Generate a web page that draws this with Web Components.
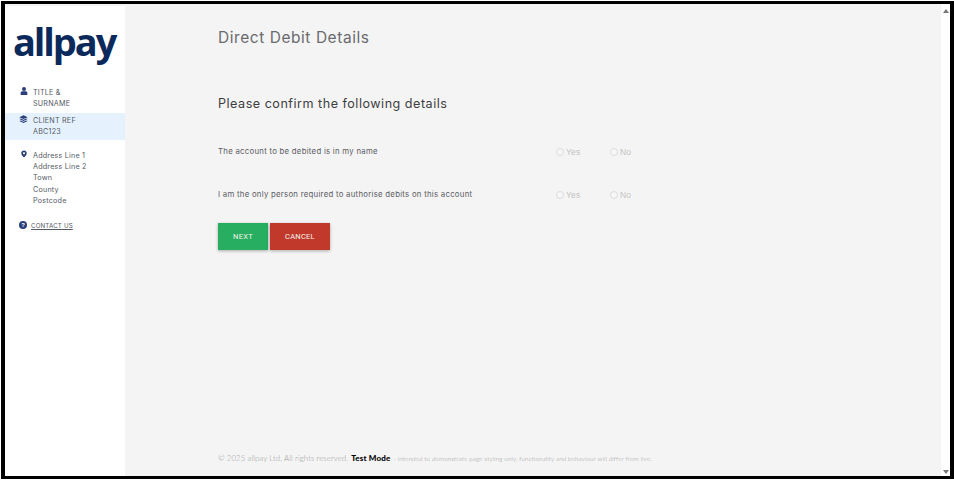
<!DOCTYPE html>
<html lang="en">
<head>
<meta charset="utf-8">
<title>Direct Debit Details</title>
<style>
  html, body { margin: 0; height: 100%; }
  body { background: #fff; font-family: "Inter", "Liberation Sans", sans-serif; overflow: hidden; }
</style>
</head>
<body>
<app-shell>
  <side-bar slot="side">
    <side-item icon="user">TITLE &amp;<br>SURNAME</side-item>
    <side-item icon="layers" active>CLIENT REF<br>ABC123</side-item>
    <side-item icon="pin" address>Address Line 1<br>Address Line 2<br>Town<br>County<br>Postcode</side-item>
    <contact-link></contact-link>
  </side-bar>
  <debit-form slot="main"></debit-form>
</app-shell>

<script>
const ICONS = {
  user: '<svg viewBox="0 0 10 10" width="8" height="8"><circle cx="5" cy="2.6" r="2.5" fill="#2c3e7b"/><path d="M0.8 10V7.6C0.8 6 2 5.2 3.2 5.2H6.8C8 5.2 9.2 6 9.2 7.6V10Z" fill="#2c3e7b"/></svg>',
  layers: '<svg viewBox="0 0 10 10" width="9" height="9"><path d="M5 0.4L9.6 2.4 5 4.4 0.4 2.4Z M0.4 4.5L2 3.9 5 5.2 8 3.9 9.6 4.5 5 6.6Z M0.4 6.8L2 6.2 5 7.5 8 6.2 9.6 6.8 5 8.9Z" fill="#2c3e7b"/></svg>',
  pin: '<svg viewBox="0 0 10 12" width="6" height="8"><path fill-rule="evenodd" d="M5 0.2C2.3 0.2 0.4 2.2 0.4 4.7C0.4 7.4 3.6 10.6 5 11.8C6.4 10.6 9.6 7.4 9.6 4.7C9.6 2.2 7.7 0.2 5 0.2ZM5 3C6 3 6.7 3.7 6.7 4.6S6 6.3 5 6.3S3.3 5.5 3.3 4.6S4 3 5 3Z" fill="#2c3e7b"/></svg>'
};

class AppShell extends HTMLElement {
  constructor() {
    super();
    this.attachShadow({ mode: 'open' }).innerHTML = `
      <style>
        :host {
          display: flex;
          box-sizing: border-box;
          width: 954px;
          height: 480px;
          padding: 1px 0 1px 1px;
          background: #fff;
        }
        .frame {
          flex: 1;
          display: flex;
          min-width: 0;
          border: solid #000;
          border-width: 3px 4px 3px 4px;
          background: #f4f4f4;
        }
        .side { flex: 0 0 120px; min-width: 0; display: block; padding-top: 2px; }
        .main { flex: 1; min-width: 0; display: flex; }
        .bar {
          flex: 0 0 9px;
          background: #fff;
          display: flex;
          flex-direction: column;
          justify-content: space-between;
          align-items: center;
          padding: 5px 0 2px;
        }
        .up, .down { width: 0; height: 0; border-left: 3px solid transparent; border-right: 3px solid transparent; }
        .up { border-bottom: 4px solid #777; }
        .down { border-top: 4px solid #777; }
      </style>
      <div class="frame">
        <div class="side"><slot name="side"></slot></div>
        <div class="main"><slot name="main"></slot></div>
        <div class="bar"><span class="up"></span><span class="down"></span></div>
      </div>`;
  }
}

class SideBar extends HTMLElement {
  constructor() {
    super();
    this.attachShadow({ mode: 'open' }).innerHTML = `
      <style>
        :host {
          display: flex;
          flex-direction: column;
          box-sizing: border-box;
          height: 100%;
          background: #fff;
          border-top-left-radius: 2px;
          font-family: "Inter", "Liberation Sans", sans-serif;
        }
        .logo {
          height: 76px;
          padding: 13px 0 0 8px;
          box-sizing: border-box;
          font: 700 38px/44px "Open Sans", "Liberation Sans", sans-serif;
          letter-spacing: -2.1px;
          color: #0b2a5b;
        }
      </style>
      <div class="logo">allpay</div>
      <slot></slot>`;
  }
}

class SideItem extends HTMLElement {
  constructor() {
    super();
    const icon = ICONS[this.getAttribute('icon')];
    this.attachShadow({ mode: 'open' }).innerHTML = `
      <style>
        :host {
          display: flex;
          gap: 5px;
          padding: 5px 0 3.2px 14px;
          font-size: 7.2px;
          line-height: 11.4px;
          letter-spacing: 0.2px;
          color: #555a66;
        }
        :host([active]) { background: #e5f2fd; padding-top: 1.5px; padding-bottom: 2.7px; }
        :host([address]) { padding-top: 9.5px; padding-bottom: 0; margin-bottom: 14.5px; }
        .icon { flex: 0 0 9px; display: flex; justify-content: center; }
        svg { display: block; }
      </style>
      <span class="icon">${icon}</span>
      <span><slot></slot></span>`;
  }
}

class ContactLink extends HTMLElement {
  constructor() {
    super();
    this.attachShadow({ mode: 'open' }).innerHTML = `
      <style>
        :host {
          display: flex;
          align-items: center;
          gap: 4px;
          padding-left: 14px;
          font-size: 6.2px;
          letter-spacing: 0.15px;
          color: #555a66;
        }
        .q {
          width: 8px; height: 8px; border-radius: 50%;
          background: #2c3e7b; color: #fff;
          font: 700 6px/8px "Liberation Sans", sans-serif;
          text-align: center; letter-spacing: 0;
        }
        a { color: inherit; text-decoration: underline; }
      </style>
      <span class="q">?</span><a href="#">CONTACT US</a>`;
  }
}

class ChoiceRow extends HTMLElement {
  constructor() {
    super();
    this.attachShadow({ mode: 'open' }).innerHTML = `
      <style>
        :host {
          display: grid;
          grid-template-columns: 338px 54px auto;
          align-items: center;
          height: 43px;
          font-size: 7.8px;
          letter-spacing: 0.26px;
          color: #5c5c64;
        }
        label {
          display: flex;
          align-items: center;
          gap: 2px;
          margin-top: 2px;
          font: 8.5px "Liberation Sans", sans-serif;
          letter-spacing: 0.2px;
          color: #c2c2c2;
        }
        i {
          box-sizing: border-box;
          width: 8px; height: 8px;
          border-radius: 50%;
          border: 1px solid #dcdcdc;
          background: #f6f6f6;
        }
      </style>
      <span><slot></slot></span>
      <label><i></i>Yes</label>
      <label><i></i>No</label>`;
  }
}

class ActionButton extends HTMLElement {
  constructor() {
    super();
    this.attachShadow({ mode: 'open' }).innerHTML = `
      <style>
        :host {
          display: flex;
          align-items: center;
          justify-content: center;
          height: 27px;
          width: var(--w, 50px);
          background: var(--bg, #27ae60);
          color: #f3f3ee;
          font: 400 7.5px "Roboto", "Liberation Sans", sans-serif;
          letter-spacing: 0.25px;
          box-shadow: 0 1px 3px rgba(0,0,0,.3);
        }
      </style>
      <slot></slot>`;
  }
}

class DebitForm extends HTMLElement {
  constructor() {
    super();
    this.attachShadow({ mode: 'open' }).innerHTML = `
      <style>
        :host {
          display: flex;
          flex-direction: column;
          flex: 1;
          box-sizing: border-box;
          padding: 24px 0 0 93px;
          min-width: 0;
        }
        h1 {
          margin: 0;
          font-weight: 400;
          font-size: 15.5px;
          line-height: 20px;
          letter-spacing: 0.55px;
          color: #6a6a6e;
        }
        h2 {
          margin: 46px 0 15px;
          font-weight: 400;
          font-size: 12.6px;
          line-height: 20px;
          letter-spacing: 0.5px;
          color: #3e3e42;
        }
        .buttons { display: flex; gap: 2px; margin-top: 8px; }
        footer {
          margin-top: auto;
          padding-bottom: 13px;
          display: flex;
          align-items: baseline;
          white-space: nowrap;
          font: 300 7.8px "Lato", "Liberation Sans", sans-serif;
          color: #9d9d9d;
          letter-spacing: 0.1px;
        }
        b { font: 900 8px "Lato", "Liberation Sans", sans-serif; color: #000; margin: 0 3px; letter-spacing: .2px; }
        small { font-size: 6.3px; color: #9a9a9a; }
      </style>
      <h1>Direct Debit Details</h1>
      <h2>Please confirm the following details</h2>
      <choice-row>The account to be debited is in my name</choice-row>
      <choice-row>I am the only person required to authorise debits on this account</choice-row>
      <div class="buttons">
        <action-button>NEXT</action-button>
        <action-button style="--bg:#c0392b;--w:60px">CANCEL</action-button>
      </div>
      <footer>© 2025 allpay Ltd, All rights reserved.<b>Test Mode</b><small>- intended to demonstrate page styling only, functionality and behaviour will differ from live.</small></footer>`;
  }
}

customElements.define('app-shell', AppShell);
customElements.define('side-bar', SideBar);
customElements.define('side-item', SideItem);
customElements.define('contact-link', ContactLink);
customElements.define('choice-row', ChoiceRow);
customElements.define('action-button', ActionButton);
customElements.define('debit-form', DebitForm);
</script>
</body>
</html>
